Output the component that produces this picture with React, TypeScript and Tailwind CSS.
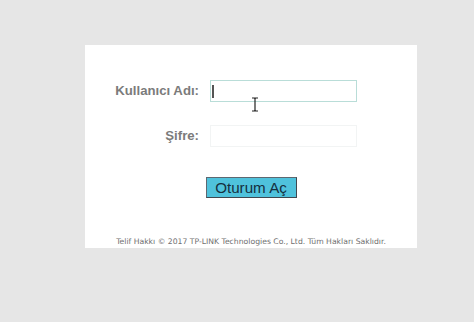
export default function App() {
  return (
    <div className="w-[474px] h-[322px] bg-[#e6e6e6] pt-[45px] pl-[85px] relative overflow-hidden">
      <div className="w-[332px] h-[203px] bg-white flex flex-col items-center pt-[35px]">
        <div className="grid grid-cols-[114px_147px] gap-x-[11px] gap-y-[23px] items-center self-start">
          <label className="text-right text-[13.2px] font-bold text-[#7b7b7b] font-['Liberation_Sans',Arial,sans-serif]">
            Kullanıcı Adı:
          </label>
          <div className="h-[22px] border border-[#b9ddd8] flex items-center pl-[1px]">
            <div className="w-[2px] h-[13px] bg-[#555]" />
          </div>
          <label className="text-right text-[13.2px] font-bold text-[#7b7b7b] font-['Liberation_Sans',Arial,sans-serif]">
            Şifre:
          </label>
          <div className="h-[22px] border border-[#f2f4f4]" />
        </div>
        <button className="mt-[30px] w-[91px] h-[22px] bg-[#4fc2dc] border border-[#5d6871] border-r-[#3f4850] border-b-[#3f4850] text-[15.2px] leading-none text-[#15303f] font-['Liberation_Sans',Arial,sans-serif]">
          Oturum Aç
        </button>
        <p className="mt-[38px] text-[7.7px] text-[#707070] font-['DejaVu_Sans',Verdana,sans-serif] whitespace-nowrap">
          Telif Hakkı © 2017 TP-LINK Technologies Co., Ltd. Tüm Hakları Saklıdır.
        </p>
      </div>
      <svg className="absolute left-[251px] top-[97px]" width="8" height="15" viewBox="0 0 8 15">
        <path d="M1 1h2.5l0.5 1 0.5-1H7M4 2v11M1 14h2.5l0.5-1 0.5 1H7" fill="none" stroke="#222" strokeWidth="1.2" />
      </svg>
    </div>
  );
}
